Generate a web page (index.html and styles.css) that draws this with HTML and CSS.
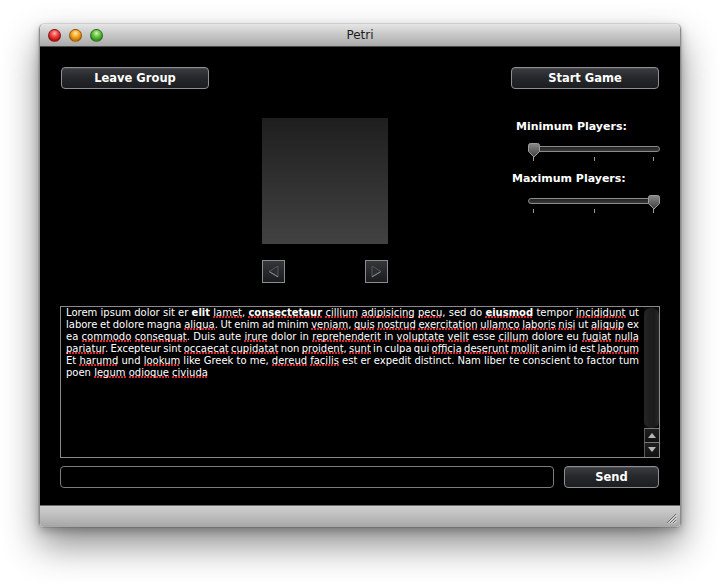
FILE: index.html
```html
<!DOCTYPE html>
<html>
<head>
<meta charset="utf-8">
<title>Petri</title>
<link rel="stylesheet" href="styles.css">
</head>
<body>
<div class="window">
  <div class="titlebar">
    <div class="lights">
      <span class="light red"></span>
      <span class="light orange"></span>
      <span class="light green"></span>
    </div>
    <div class="title">Petri</div>
  </div>
  <div class="content">
    <div class="toprow">
      <button class="btn">Leave Group</button>
      <button class="btn">Start Game</button>
    </div>
    <div class="middle">
      <div class="preview">
        <div class="picture"></div>
        <div class="arrows">
          <button class="arrow"><svg width="21" height="21" viewBox="0 0 21 21"><polygon points="15,5 15,16 6,10.5" fill="#2c2d30" stroke="#55565a" stroke-width="1"/><line x1="6.5" y1="10.8" x2="15" y2="15.8" stroke="#8a8a8a" stroke-width="1"/></svg></button>
          <button class="arrow"><svg width="21" height="21" viewBox="0 0 21 21"><polygon points="6,5 6,16 15,10.5" fill="#2c2d30" stroke="#55565a" stroke-width="1"/><line x1="6" y1="15.8" x2="14.5" y2="10.8" stroke="#8a8a8a" stroke-width="1"/></svg></button>
        </div>
      </div>
      <div class="settings">
        <div class="label label-min">Minimum Players:</div>
        <div class="slider">
          <div class="track"></div>
          <span class="tick t1"></span><span class="tick t2"></span><span class="tick t3"></span>
          <svg class="thumb thumb-min" width="12" height="15" viewBox="0 0 12 15"><defs><linearGradient id="tg1" x1="0" y1="0" x2="0" y2="1"><stop offset="0" stop-color="#8a8a8a"/><stop offset="1" stop-color="#3e3e3e"/></linearGradient></defs><path d="M2.5 0.5 H9.5 Q11.5 0.5 11.5 2.5 V8.5 L6 14 L0.5 8.5 V2.5 Q0.5 0.5 2.5 0.5 Z" fill="url(#tg1)" stroke="#9c9c9c" stroke-width="1"/></svg>
        </div>
        <div class="label label-max">Maximum Players:</div>
        <div class="slider">
          <div class="track"></div>
          <span class="tick t1"></span><span class="tick t2"></span><span class="tick t3"></span>
          <svg class="thumb thumb-max" width="12" height="15" viewBox="0 0 12 15"><defs><linearGradient id="tg2" x1="0" y1="0" x2="0" y2="1"><stop offset="0" stop-color="#8a8a8a"/><stop offset="1" stop-color="#3e3e3e"/></linearGradient></defs><path d="M2.5 0.5 H9.5 Q11.5 0.5 11.5 2.5 V8.5 L6 14 L0.5 8.5 V2.5 Q0.5 0.5 2.5 0.5 Z" fill="url(#tg2)" stroke="#9c9c9c" stroke-width="1"/></svg>
        </div>
      </div>
    </div>
    <div class="log">
      <div class="text">
        <div class="ln">Lorem ipsum dolor sit er <b>elit</b> <u>lamet</u>, <b><u>consectetaur</u></b> <u>cillium</u> <u>adipisicing</u> <u>pecu</u>, sed do <b><u>eiusmod</u></b> tempor <u>incididunt</u> ut</div>
        <div class="ln">labore et dolore magna <u>aliqua</u>. Ut enim ad minim <u>veniam</u>, <u>quis</u> <u>nostrud</u> <u>exercitation</u> <u>ullamco</u> <u>laboris</u> <u>nisi</u> ut <u>aliquip</u> ex</div>
        <div class="ln">ea <u>commodo</u> <u>consequat</u>. Duis aute <u>irure</u> dolor in <u>reprehenderit</u> in <u>voluptate</u> <u>velit</u> esse <u>cillum</u> dolore eu <u>fugiat</u> <u>nulla</u></div>
        <div class="ln"><u>pariatur</u>. Excepteur sint <u>occaecat</u> <u>cupidatat</u> non <u>proident</u>, <u>sunt</u> in culpa qui <u>officia</u> <u>deserunt</u> <u>mollit</u> anim id est <u>laborum</u></div>
        <div class="ln">Et <u>harumd</u> und <u>lookum</u> like Greek to me, <u>dereud</u> <u>facilis</u> est er expedit distinct. Nam liber te conscient to factor tum</div>
        <div class="ln last">poen <u>legum</u> <u>odioque</u> <u>civiuda</u></div>
      </div>
      <div class="scrollbar">
        <div class="sb-track"><div class="sb-knob"></div></div>
        <div class="sb-btn"><svg width="14" height="13" viewBox="0 0 14 13"><polygon points="7,4 11,9 3,9" fill="#b5b5b5"/></svg></div>
        <div class="sb-btn sb-down"><svg width="14" height="14" viewBox="0 0 14 14"><polygon points="3,4 11,4 7,9" fill="#b5b5b5"/></svg></div>
      </div>
    </div>
    <div class="inputrow">
      <div class="input"></div>
      <button class="btn send">Send</button>
    </div>
  </div>
  <div class="statusbar">
    <svg class="grip" width="12" height="12" viewBox="0 0 12 12"><g stroke-width="1"><line x1="2" y1="11" x2="11" y2="2" stroke="#6a6a6a"/><line x1="3" y1="11.5" x2="11.5" y2="3" stroke="#e6e6e6"/><line x1="5" y1="11" x2="11" y2="5" stroke="#6a6a6a"/><line x1="6" y1="11.5" x2="11.5" y2="6" stroke="#e6e6e6"/><line x1="8" y1="11" x2="11" y2="8" stroke="#6a6a6a"/><line x1="9" y1="11.5" x2="11.5" y2="9" stroke="#e6e6e6"/></g></svg>
  </div>
</div>
</body>
</html>
```

FILE: styles.css
```css
* { box-sizing: border-box; }
html, body { margin: 0; padding: 0; }
body {
  background: #ffffff;
  font-family: "DejaVu Sans", "Liberation Sans", sans-serif;
  padding: 24px 0 0 39px;
  width: 720px;
  height: 582px;
  overflow: hidden;
}
.window {
  width: 642px;
  height: 503px;
  display: flex;
  flex-direction: column;
  border-left: 1px solid #8c8c8c;
  border-right: 1px solid #8c8c8c;
  border-radius: 5px 5px 4px 4px;
  box-shadow: 0 18px 36px rgba(0,0,0,0.45), 0 4px 10px rgba(0,0,0,0.25), 0 0 0 1px rgba(0,0,0,0.1);
}
.titlebar {
  height: 23px;
  flex: none;
  display: flex;
  align-items: center;
  position: relative;
  border-radius: 5px 5px 0 0;
  background: linear-gradient(#e6e6e6, #cccccc 40%, #aaaaaa);
  border-bottom: 1px solid #4a4a4a;
}
.lights {
  display: flex;
  gap: 8px;
  padding-left: 8px;
  padding-top: 1px;
}
.light {
  width: 13px;
  height: 13px;
  border-radius: 50%;
  border: 1px solid rgba(0,0,0,0.35);
}
.red { background: radial-gradient(circle at 50% 30%, #ffb3b3 0, #f04848 35%, #b80d0d 75%, #e63c3c 100%); }
.orange { background: radial-gradient(circle at 50% 30%, #ffe7a6 0, #f7b030 35%, #c66e05 75%, #f2a82a 100%); }
.green { background: radial-gradient(circle at 50% 30%, #d2f7b0 0, #6cc84a 35%, #2f8d1a 75%, #68c44b 100%); }
.title {
  position: absolute;
  left: 0;
  right: 0;
  top: 4px;
  text-align: center;
  font-size: 12px;
  color: #1e1e1e;
}
.content {
  flex: 1;
  background: #000;
  padding: 20px 20px 17px 20px;
  display: flex;
  flex-direction: column;
}
.toprow {
  display: flex;
  justify-content: space-between;
  padding: 0 1px;
}
.btn {
  font-family: "DejaVu Sans", sans-serif;
  font-weight: bold;
  font-size: 11.5px;
  color: #fff;
  width: 148px;
  height: 22px;
  padding: 0;
  border: 1px solid #8e8f92;
  border-radius: 4px;
  background: linear-gradient(#3c3d40, #26272a 50%, #1c1d20);
  box-shadow: inset 0 1px 0 rgba(255,255,255,0.08);
}
.middle {
  height: 217px;
  display: flex;
}
.preview {
  margin-left: 202px;
  margin-top: 29px;
  width: 126px;
}
.picture {
  width: 126px;
  height: 126px;
  background: linear-gradient(#1e1e1e, #424242);
}
.arrows {
  margin-top: 16px;
  display: flex;
  justify-content: space-between;
}
.arrow {
  width: 23px;
  height: 23px;
  padding: 0;
  border: 1px solid #8a8b8e;
  background: linear-gradient(#35363a, #1a1b1e);
  display: flex;
  align-items: center;
  justify-content: center;
}
.settings {
  margin-left: auto;
  margin-top: 31px;
  width: 148px;
}
.label {
  font-weight: bold;
  font-size: 11px;
  line-height: 14px;
  color: #fff;
}
.label-min { padding-left: 4px; }
.label-max { padding-left: 0; margin-top: 11px; }
.slider {
  position: relative;
  margin-left: 16px;
  width: 132px;
  height: 20px;
  margin-top: 7px;
}
.track {
  position: absolute;
  left: 0;
  right: 0;
  top: 5px;
  height: 6px;
  border-radius: 3px;
  border: 1px solid #8c8c8c;
  background: linear-gradient(#222, #3a3a3a);
}
.tick {
  position: absolute;
  top: 16px;
  width: 1px;
  height: 4px;
  background: #9a9a9a;
}
.t1 { left: 5px; }
.t2 { left: 66px; }
.t3 { left: 125px; }
.thumb {
  position: absolute;
  top: 2px;
}
.thumb-min { left: 0; }
.thumb-max { right: 0; }
.log {
  height: 152px;
  border: 1px solid #8a8a8a;
  display: flex;
  flex: none;
}
.text {
  flex: 1;
  padding: 0 5px 0 5px;
  color: #fff;
  font-size: 10px;
  line-height: 12px;
  word-spacing: -1px;
}
.ln {
  text-align: justify;
  text-align-last: justify;
}
.ln.last { text-align-last: left; word-spacing: 0; }
.text u {
  text-decoration: none;
  background-image: repeating-linear-gradient(90deg, #d8262c 0 2px, transparent 2px 3px);
  background-size: 100% 2px;
  background-position: 0 100%;
  background-repeat: no-repeat;
}
.text b { font-weight: bold; }
.scrollbar {
  width: 15px;
  display: flex;
  flex-direction: column;
  background: #0b0b0b;
}
.sb-track {
  flex: 1;
  padding: 1px 0 0 0;
}
.sb-knob {
  height: 100%;
  border-radius: 7px;
  background: linear-gradient(90deg, #262626, #1e1e1e 40%, #1c1c1c 70%, #2a2a2a);
}
.sb-btn {
  height: 14px;
  border-left: 1px solid #5a5a5a;
  border-top: 1px solid #7a7a7a;
  background: linear-gradient(#202020, #111);
  display: flex;
  align-items: center;
  justify-content: center;
}
.sb-down { height: 15px; }
.inputrow {
  margin-top: 8px;
  display: flex;
  padding-right: 1px;
}
.input {
  width: 494px;
  height: 22px;
  border: 1px solid #7c7c7c;
  border-radius: 4px;
  background: #000;
}
.send {
  width: 95px;
  margin-left: auto;
}
.statusbar {
  height: 22px;
  flex: none;
  border-top: 1px solid #6a6a6a;
  border-radius: 0 0 4px 4px;
  background: linear-gradient(#d0d0d0, #bcbcbc 50%, #a6a6a6);
  display: flex;
  justify-content: flex-end;
  align-items: flex-end;
  padding: 0 3px 3px 0;
}
```
